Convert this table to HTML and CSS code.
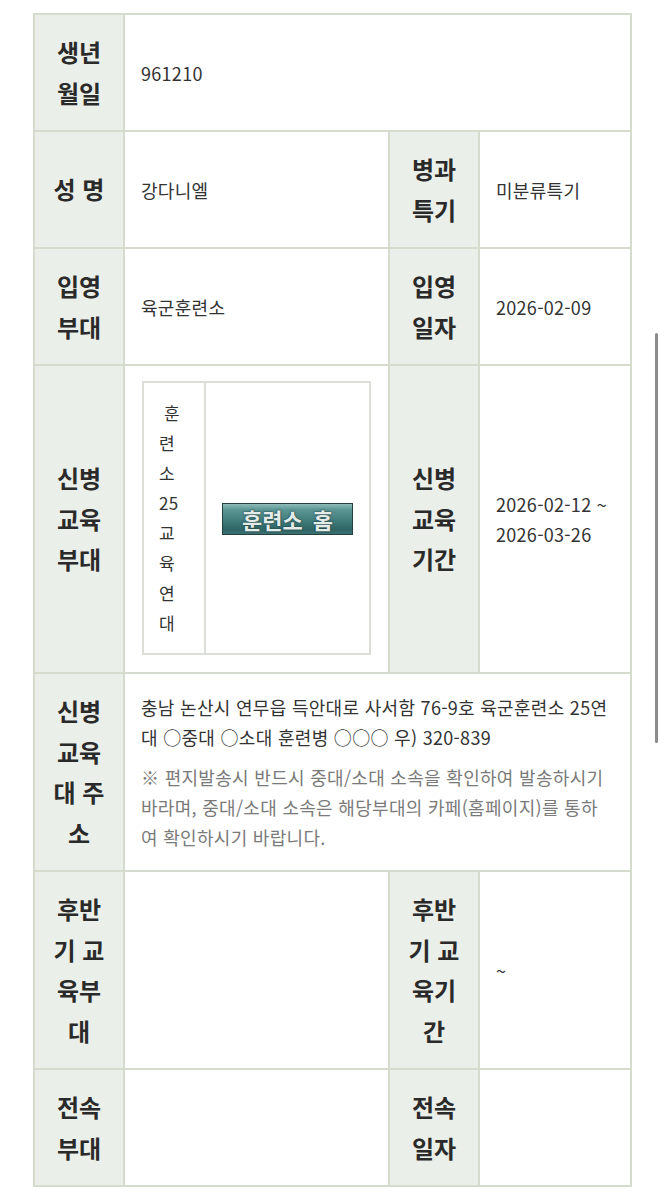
FILE: index.html
```html
<!DOCTYPE html>
<html lang="ko">
<head>
<meta charset="utf-8">
<link rel="stylesheet" href="styles.css">
</head>
<body>
<div class="page">
  <table class="info">
    <colgroup>
      <col class="c-lbl"><col class="c-val1"><col class="c-lbl"><col class="c-val2">
    </colgroup>
    <tbody>
      <tr>
        <th class="lbl">생년월일</th>
        <td class="val" colspan="3">961210</td>
      </tr>
      <tr>
        <th class="lbl">성 명</th>
        <td class="val">강다니엘</td>
        <th class="lbl">병과특기</th>
        <td class="val">미분류특기</td>
      </tr>
      <tr>
        <th class="lbl">입영부대</th>
        <td class="val">육군훈련소</td>
        <th class="lbl">입영일자</th>
        <td class="val">2026-02-09</td>
      </tr>
      <tr>
        <th class="lbl">신병교육부대</th>
        <td class="val box">
          <table class="inner">
            <tr>
              <td class="unit">&nbsp;훈련소25교육연대</td>
              <td class="btn-cell"><span class="home-btn">훈련소 홈</span></td>
            </tr>
          </table>
        </td>
        <th class="lbl">신병교육기간</th>
        <td class="val">2026-02-12 ~ 2026-03-26</td>
      </tr>
      <tr>
        <th class="lbl">신병교육대 주소</th>
        <td class="val" colspan="3">
          <p class="addr">충남 논산시 연무읍 득안대로 사서함 76-9호 육군훈련소 25연대 ○중대 ○소대 훈련병 ○○○ 우) 320-839</p>
          <p class="note">※ 편지발송시 반드시 중대/소대 소속을 확인하여 발송하시기 바라며, 중대/소대 소속은 해당부대의 카페(홈페이지)를 통하여 확인하시기 바랍니다.</p>
        </td>
      </tr>
      <tr>
        <th class="lbl">후반기 교육부대</th>
        <td class="val"></td>
        <th class="lbl">후반기 교육기간</th>
        <td class="val">~</td>
      </tr>
      <tr>
        <th class="lbl">전속부대</th>
        <td class="val"></td>
        <th class="lbl">전속일자</th>
        <td class="val"></td>
      </tr>
    </tbody>
  </table>
</div>
<div class="scroll-ind"></div>
</body>
</html>
```
FILE: styles.css
```css
html, body {
  margin: 0;
  padding: 0;
  background: #ffffff;
}
body {
  font-family: "Noto Sans CJK KR", "Noto Sans", sans-serif;
  color: #333333;
}
.page {
  padding: 13px 0 0 33px;
}
.info {
  border-collapse: collapse;
  width: 597px;
  table-layout: fixed;
}
.c-lbl { width: 90px; }
.c-val1 { width: 265px; }
.c-val2 { width: 152px; }
.info > tbody > tr > th,
.info > tbody > tr > td {
  border: 2px solid #d5dccd;
}
.lbl {
  background: #ebefe9;
  font-size: 24px;
  font-weight: 700;
  line-height: 40.5px;
  padding: 17px 12px;
  text-align: center;
  vertical-align: middle;
  color: #2a2a2a;
}
.val {
  font-size: 18px;
  letter-spacing: 0.3px;
  line-height: 30px;
  padding: 14px 16px;
  text-align: left;
  vertical-align: middle;
  color: #333333;
}
.box {
  padding: 15px 17px 17px 17px;
}
.addr {
  margin: 0;
}
.note {
  margin: 10px 0 0;
  color: #7a7a7a;
}
.inner {
  border-collapse: collapse;
  width: 100%;
}
.inner td {
  border: 2px solid #dcdfd8;
}
.unit {
  width: 30px;
  padding: 15px 15px;
  font-size: 17px;
  line-height: 30px;
  color: #333;
  vertical-align: middle;
}
.btn-cell {
  text-align: center;
  vertical-align: middle;
  padding: 0;
}
.home-btn {
  display: inline-block;
  width: 129px;
  height: 30px;
  line-height: 30px;
  border: 1px solid #24403f;
  background: linear-gradient(to bottom, #8fbcb9 0%, #5c9795 18%, #45807f 50%, #2f6565 85%, #3d7171 100%);
  color: #e4ecea;
  font-size: 22px;
  font-weight: 700;
  letter-spacing: 0;
  word-spacing: 4px;
  text-shadow: 0 0 2px #1d3f40, 0 0 1px #1a3536;
  vertical-align: middle;
}
.scroll-ind {
  position: absolute;
  left: 655px;
  top: 333px;
  width: 3px;
  height: 410px;
  border-radius: 2px;
  background: #8c8c8c;
}
```
